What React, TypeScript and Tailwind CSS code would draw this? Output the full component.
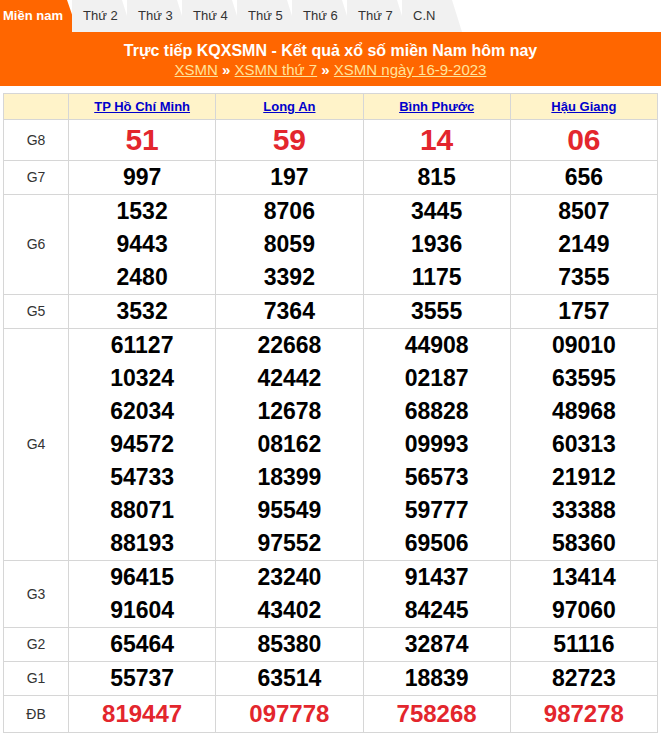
import React from "react";

const days = ["Thứ 2", "Thứ 3", "Thứ 4", "Thứ 5", "Thứ 6", "Thứ 7", "C.N"];

const provinces = ["TP Hồ Chí Minh", "Long An", "Bình Phước", "Hậu Giang"];

type Prize = { label: string; values: string[][]; kind?: "g8" | "db" };

const prizes: Prize[] = [
  { label: "G8", kind: "g8", values: [["51"], ["59"], ["14"], ["06"]] },
  { label: "G7", values: [["997"], ["197"], ["815"], ["656"]] },
  {
    label: "G6",
    values: [
      ["1532", "9443", "2480"],
      ["8706", "8059", "3392"],
      ["3445", "1936", "1175"],
      ["8507", "2149", "7355"],
    ],
  },
  { label: "G5", values: [["3532"], ["7364"], ["3555"], ["1757"]] },
  {
    label: "G4",
    values: [
      ["61127", "10324", "62034", "94572", "54733", "88071", "88193"],
      ["22668", "42442", "12678", "08162", "18399", "95549", "97552"],
      ["44908", "02187", "68828", "09993", "56573", "59777", "69506"],
      ["09010", "63595", "48968", "60313", "21912", "33388", "58360"],
    ],
  },
  {
    label: "G3",
    values: [
      ["96415", "91604"],
      ["23240", "43402"],
      ["91437", "84245"],
      ["13414", "97060"],
    ],
  },
  { label: "G2", values: [["65464"], ["85380"], ["32874"], ["51116"]] },
  { label: "G1", values: [["55737"], ["63514"], ["18839"], ["82723"]] },
  { label: "ĐB", kind: "db", values: [["819447"], ["097778"], ["758268"], ["987278"]] },
];

function numberClass(kind?: "g8" | "db") {
  if (kind === "g8") return "text-[30px] leading-[40px] text-[#e3262d]";
  if (kind === "db") return "text-[24px] leading-[36px] text-[#e3262d]";
  return "text-[23px] leading-[33px] text-black";
}

export default function App() {
  return (
    <div className="w-[661px] min-h-[733px] bg-white font-['Liberation_Sans',Arial,sans-serif] overflow-hidden">
      {/* day tabs */}
      <div className="flex h-8 items-stretch">
        <div className="relative w-[78px] bg-[#ff6600] [clip-path:polygon(0_0,67px_0,100%_100%,0_100%)] text-white font-bold text-[13px] pl-[3px] flex items-center">
          Miền nam
        </div>
        <div className="flex -ml-[6px]">
          {days.map((d) => (
            <div
              key={d}
              className="w-[60px] -mr-[5px] bg-[#f1f1f1] [clip-path:polygon(0_0,50px_0,100%_100%,0_100%)] text-[#333] text-[13px] pl-[11px] flex items-center"
            >
              {d}
            </div>
          ))}
        </div>
      </div>

      {/* banner */}
      <div className="bg-[#ff6600] h-[54px] pt-[9px] text-center">
        <h1 className="text-white font-bold text-[16px] leading-[20px]">
          Trực tiếp KQXSMN - Kết quả xổ số miền Nam hôm nay
        </h1>
        <div className="text-[15px] leading-[17px] text-[#ffe49b]">
          <a className="underline">XSMN</a>
          <span className="text-white font-bold"> » </span>
          <a className="underline">XSMN thứ 7</a>
          <span className="text-white font-bold"> » </span>
          <a className="underline">XSMN ngày 16-9-2023</a>
        </div>
      </div>

      {/* results */}
      <div className="pt-[7px] pl-[3px]">
        <table className="w-[655px] border-collapse table-fixed">
          <colgroup>
            <col className="w-[65px]" />
            <col />
            <col />
            <col />
            <col />
          </colgroup>
          <thead>
            <tr className="bg-[#fff3c9] h-[26px]">
              <th className="border border-[#d6d6d6]"></th>
              {provinces.map((p) => (
                <th key={p} className="border border-[#d6d6d6] text-[13px] font-bold">
                  <a className="underline text-[#0000cc]">{p}</a>
                </th>
              ))}
            </tr>
          </thead>
          <tbody>
            {prizes.map((row) => (
              <tr key={row.label}>
                <td className="border border-[#d6d6d6] text-center text-[14px] text-[#333]">
                  {row.label}
                </td>
                {row.values.map((vals, i) => (
                  <td key={i} className="border border-[#d6d6d6] text-center font-bold py-0">
                    {vals.map((v) => (
                      <div key={v} className={numberClass(row.kind)}>
                        {v}
                      </div>
                    ))}
                  </td>
                ))}
              </tr>
            ))}
          </tbody>
        </table>
      </div>
    </div>
  );
}
